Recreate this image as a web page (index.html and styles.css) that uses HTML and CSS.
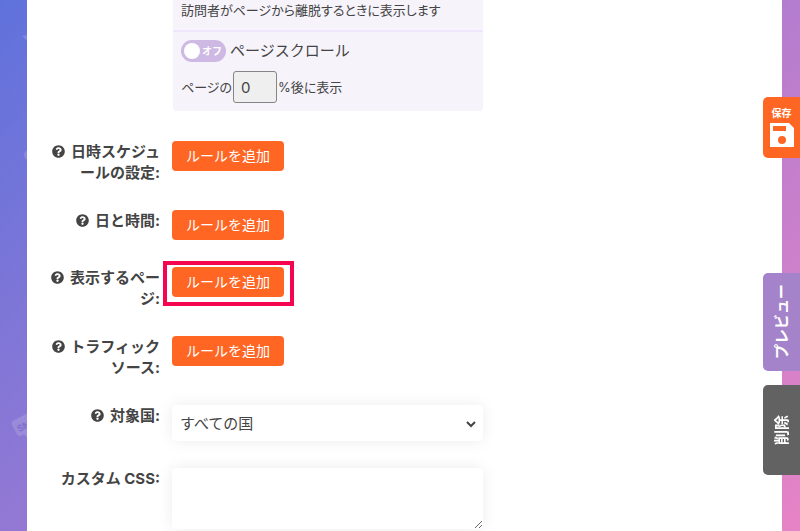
FILE: index.html
```html
<!DOCTYPE html>
<html lang="ja">
<head>
<meta charset="utf-8">
<meta name="viewport" content="width=device-width, initial-scale=1">
<title>表示ルール</title>
<link rel="stylesheet" href="styles.css">
</head>
<body>
<svg class="bg-art" width="40" height="450" viewBox="0 0 40 450" aria-hidden="true">
  <path d="M22 36l10-3-6 7z"/>
  <circle cx="29" cy="155" r="5"/>
  <g transform="rotate(-28 24 424)">
    <path d="M16 416h24v17H25l-4 6-2-6h-3q-3 0-3-3v-11q0-3 3-3z"/>
    <text x="16" y="429">SMS</text>
  </g>
</svg>

<svg class="symbols" aria-hidden="true">
  <symbol id="help" viewBox="0 0 512 512">
    <path d="M504 256c0 137-111 248-248 248S8 393 8 256 119 8 256 8s248 111 248 248zM262.700 90c-54.500 0-89.300 23-116.500 63.800-3.500 5.300-2.400 12.400 2.700 16.200l34.700 26.300c5.200 3.900 12.600 3 16.700-2.100 17.900-22.700 30.100-35.800 57.300-35.800 20.400 0 45.700 13.100 45.700 33 0 15-12.400 22.700-32.500 34C247 238.500 216 254.900 216 296v4c0 6.600 5.400 12 12 12h56c6.600 0 12-5.400 12-12v-1.300c0-28.500 83.200-29.600 83.200-106.700 0-58-60.200-102-116.500-102zM256 338c-25.400 0-46 20.600-46 46s20.600 46 46 46 46-20.600 46-46-20.600-46-46-46z"/>
  </symbol>
</svg>

<main class="page">
  <section class="panel">
    <p class="panel-note">訪問者がページから離脱するときに表示します</p>
    <div class="panel-item">
      <label class="toggle">
        <input type="checkbox">
        <span class="switch">オフ</span>
        ページスクロール
      </label>
      <div class="scroll-rule">
        <label for="scroll">ページの</label>
        <input id="scroll" type="text" value="0">
        <span>%後に表示</span>
      </div>
    </div>
  </section>

  <form class="rules">
    <div class="row">
      <label for="schedule"><svg class="help"><use href="#help"/></svg> 日時スケジュールの設定:</label>
      <button type="button" class="add" id="schedule">ルールを追加</button>
    </div>
    <div class="row">
      <label for="daytime"><svg class="help"><use href="#help"/></svg> 日と時間:</label>
      <button type="button" class="add" id="daytime">ルールを追加</button>
    </div>
    <div class="row">
      <label for="pages"><svg class="help"><use href="#help"/></svg> 表示するページ:</label>
      <button type="button" class="add marked" id="pages">ルールを追加</button>
    </div>
    <div class="row">
      <label for="traffic"><svg class="help"><use href="#help"/></svg> トラフィックソース:</label>
      <button type="button" class="add" id="traffic">ルールを追加</button>
    </div>
    <div class="row">
      <label for="country"><svg class="help"><use href="#help"/></svg> 対象国:</label>
      <div class="select">
        <select id="country"><option>すべての国</option></select>
        <svg width="10" height="7" viewBox="0 0 10 7" aria-hidden="true"><path d="M1 1l4 4 4-4"/></svg>
      </div>
    </div>
    <div class="row">
      <label for="css">カスタム CSS:</label>
      <textarea id="css"></textarea>
    </div>
  </form>
</main>

<div class="side">
  <button type="button" class="tab save">
    保存
    <svg width="24" height="24" viewBox="0 0 24 24" aria-hidden="true"><path fill-rule="evenodd" d="M0 0h19l5 5v19H0zM3 3v5h13V3zM12 13a4 4 0 1 0 0 8 4 4 0 0 0 0-8z"/></svg>
  </button>
  <button type="button" class="tab preview"><span>プレビュー</span></button>
  <button type="button" class="tab delete"><span>削除</span></button>
</div>
</body>
</html>
```

FILE: styles.css
```css
* { box-sizing:border-box; }
body { margin:0; min-height:100vh; background:linear-gradient(132deg,#5f72dc,#e783c6); color:#444; font:15px/21px Inter,"Noto Sans CJK JP",sans-serif; }
button,input,select,textarea { font:inherit; color:inherit; }

.bg-art { position:absolute; top:0; left:0; fill:rgba(255,255,255,.14); }
.bg-art text { font-size:9px; font-weight:bold; fill:#7d70cc; }
.symbols { display:none; }

.page { position:relative; min-height:100vh; margin:0 18px 0 27px; padding:0 24px 0 21px; background:#fff; }

/* display conditions */
.panel { max-width:310px; margin-left:125px; background:#f6f3fb; border-radius:0 0 4px 4px; font-size:13px; font-feature-settings:"palt"; }
.panel-note { margin:0; padding:0 8px 9px; border-bottom:2px solid #efe6fd; }
.panel-item { padding:8px; }
.toggle { display:flex; align-items:center; gap:4px; font-size:15px; line-height:20px; font-feature-settings:normal; }
.toggle input { position:absolute; opacity:0; }
.switch { display:flex; align-items:center; justify-content:space-between; width:45px; height:22px; padding:0 4px 0 3px; background:#cdb9e3; border-radius:11px; color:#fff; font-size:10px; font-weight:bold; }
.switch::before { content:""; width:16px; height:16px; background:#fff; border-radius:50%; }
.scroll-rule { display:flex; align-items:center; margin-top:9px; }
.scroll-rule input { width:44px; height:32px; margin:0 1px; padding:0 7px; background:#efefef; border:1px solid #858585; border-radius:3px; font-size:15px; }

/* rule rows */
.rules { display:grid; gap:27px; padding-top:30px; }
.row { display:grid; grid-template-columns:112px minmax(0,311px); gap:12px; align-items:start; justify-items:start; }
.row > label { justify-self:end; text-align:right; font-weight:bold; line-break:loose; color:#444; }
.help { width:13px; height:13px; margin-right:2px; fill:#444; vertical-align:-1px; }
.add { position:relative; height:30px; padding:0 14px 2px; background:#ff6624; border:0; border-radius:4px; color:#fff; font-size:14px; }
.marked::after { content:""; position:absolute; inset:-6px -10px -9px -9px; border:4px solid #f5054f; }
.select { position:relative; width:100%; }
.select select { display:block; width:100%; height:36px; padding:0 8px; appearance:none; background:#fff; border:0; border-radius:4px; box-shadow:0 0 15px rgba(0,0,0,.08); }
.select svg { position:absolute; right:7px; top:16px; fill:none; stroke:#444; stroke-width:2; pointer-events:none; }
textarea { display:block; width:100%; height:61px; padding:8px; background:#fff; border:0; border-radius:4px; box-shadow:0 0 15px rgba(0,0,0,.08); }

/* buttons on the right edge */
.side { position:fixed; top:97px; right:0; display:flex; flex-direction:column; width:37px; }
.tab { display:flex; flex-direction:column; align-items:center; justify-content:center; padding:0; border:0; border-radius:5px 0 0 5px; color:#fff; font-weight:bold; }
.tab span { writing-mode:vertical-rl; text-orientation:sideways; transform:rotate(180deg); }
.save { height:61px; margin-bottom:115px; padding-bottom:4px; background:#ff6624; font-size:10px; line-height:16px; gap:2px; }
.save svg { fill:#fff; }
.preview { height:98px; margin-bottom:14px; background:#a583ca; }
.delete { height:90px; background:#626262; }
```
